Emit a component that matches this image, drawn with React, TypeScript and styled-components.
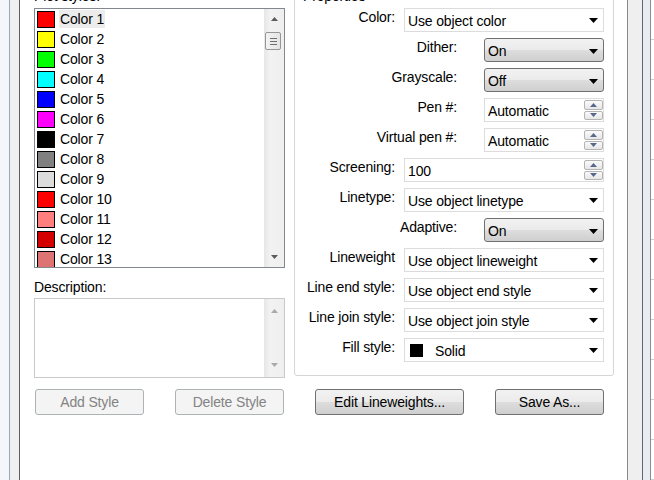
import React from "react"
import styled, { createGlobalStyle } from "styled-components"

const GlobalStyle = createGlobalStyle`
  html, body {
    margin: 0;
    padding: 0;
    background: #ffffff;
  }
  body {
    font-family: "Liberation Sans", Arial, sans-serif;
    font-size: 14px;
    letter-spacing: -0.15px;
    color: #000;
  }
`

const styles = [
  { name: "Color 1", color: "#ff0000" },
  { name: "Color 2", color: "#ffff00" },
  { name: "Color 3", color: "#00ff00" },
  { name: "Color 4", color: "#00ffff" },
  { name: "Color 5", color: "#0000ff" },
  { name: "Color 6", color: "#ff00ff" },
  { name: "Color 7", color: "#000000" },
  { name: "Color 8", color: "#808080" },
  { name: "Color 9", color: "#dcdcdc" },
  { name: "Color 10", color: "#ff0000" },
  { name: "Color 11", color: "#ff7f7f" },
  { name: "Color 12", color: "#d40000" },
  { name: "Color 13", color: "#dd7373" },
]

type Prop =
  | { label: string; kind: "flat"; value: string; fill?: boolean }
  | { label: string; kind: "button"; value: string }
  | { label: string; kind: "spin"; value: string; short?: boolean }

const properties: Prop[] = [
  { label: "Color:", kind: "flat", value: "Use object color" },
  { label: "Dither:", kind: "button", value: "On" },
  { label: "Grayscale:", kind: "button", value: "Off" },
  { label: "Pen #:", kind: "spin", value: "Automatic", short: true },
  { label: "Virtual pen #:", kind: "spin", value: "Automatic", short: true },
  { label: "Screening:", kind: "spin", value: "100" },
  { label: "Linetype:", kind: "flat", value: "Use object linetype" },
  { label: "Adaptive:", kind: "button", value: "On" },
  { label: "Lineweight", kind: "flat", value: "Use object lineweight" },
  { label: "Line end style:", kind: "flat", value: "Use object end style" },
  { label: "Line join style:", kind: "flat", value: "Use object join style" },
  { label: "Fill style:", kind: "flat", value: "Solid", fill: true },
]

function Caret() {
  return (
    <svg width="9" height="5" viewBox="0 0 9 5">
      <path d="M0 0h9L4.5 5z" fill="#000" />
    </svg>
  )
}

function ScrollArrow({ up, color }: { up?: boolean; color: string }) {
  return (
    <svg width="7" height="4" viewBox="0 0 7 4">
      <path d={up ? "M0 4h7L3.5 0z" : "M0 0h7L3.5 4z"} fill={color} />
    </svg>
  )
}

function SpinArrow({ up }: { up?: boolean }) {
  return (
    <svg width="7" height="4" viewBox="0 0 7 4">
      <path d={up ? "M0 4h7L3.5 0z" : "M0 0h7L3.5 4z"} fill="#56698c" />
    </svg>
  )
}

function Control({ prop }: { prop: Prop }) {
  const short = prop.kind === "button" || (prop.kind === "spin" && prop.short)
  if (prop.kind === "button") {
    return (
      <ButtonSelect $short>
        <span>{prop.value}</span>
        <Caret />
      </ButtonSelect>
    )
  }
  if (prop.kind === "spin") {
    return (
      <SpinBox $short={short}>
        <SpinText>{prop.value}</SpinText>
        <SpinButtons>
          <SpinButton>
            <SpinArrow up />
          </SpinButton>
          <SpinButton>
            <SpinArrow />
          </SpinButton>
        </SpinButtons>
      </SpinBox>
    )
  }
  return (
    <FlatSelect>
      <SelectValue>
        {prop.fill && <FillSwatch />}
        {prop.value}
      </SelectValue>
      <Caret />
    </FlatSelect>
  )
}

export default function App() {
  return (
    <Screen>
      <GlobalStyle />
      <LeftBackdrop />
      <LeftFrame />
      <Dialog>
        <Columns>
          <LeftColumn>
            <PaneLabel>Plot styles:</PaneLabel>
            <ListBox>
              <ListItems>
                {styles.map((s, i) => (
                  <ListRow key={s.name}>
                    <Swatch style={{ background: s.color }} />
                    <ItemName $selected={i === 0}>{s.name}</ItemName>
                  </ListRow>
                ))}
              </ListItems>
              <ScrollBar>
                <ArrowBox>
                  <ScrollArrow up color="#5c5c5c" />
                </ArrowBox>
                <Thumb>
                  <Grip />
                  <Grip />
                  <Grip />
                </Thumb>
                <ScrollSpace />
                <ArrowBox>
                  <ScrollArrow color="#5c5c5c" />
                </ArrowBox>
              </ScrollBar>
            </ListBox>
            <DescLabel>Description:</DescLabel>
            <TextArea>
              <TextBody />
              <ScrollBar>
                <ArrowBox $tall>
                  <ScrollArrow up color="#a9a9a9" />
                </ArrowBox>
                <ScrollSpace />
                <ArrowBox $tall>
                  <ScrollArrow color="#a9a9a9" />
                </ArrowBox>
              </ScrollBar>
            </TextArea>
          </LeftColumn>
          <GroupBox>
            <Legend>Properties</Legend>
            <PropList>
              {properties.map((p) => {
                const short = p.kind === "button" || (p.kind === "spin" && !!p.short)
                return (
                  <PropRow key={p.label} $short={short}>
                    <PropLabel>{p.label}</PropLabel>
                    <Control prop={p} />
                  </PropRow>
                )
              })}
            </PropList>
          </GroupBox>
        </Columns>
        <ButtonBar>
          <ButtonGroup $left>
            <DialogButton disabled $w={109}>Add Style</DialogButton>
            <DialogButton disabled $w={109}>Delete Style</DialogButton>
          </ButtonGroup>
          <ButtonGroup>
            <DialogButton $w={149}>Edit Lineweights...</DialogButton>
            <DialogButton $w={109}>Save As...</DialogButton>
          </ButtonGroup>
        </ButtonBar>
      </Dialog>
      <RightFrame />
      <RightBackdrop>
        <BackdropStrip />
        <BackdropGrid />
      </RightBackdrop>
    </Screen>
  )
}

const Screen = styled.div`
  display: flex;
  width: 654px;
  height: 480px;
  overflow: hidden;
  background: #fff;
`
const LeftBackdrop = styled.div`
  width: 9px;
  flex: none;
  background: #f3f6fa;
`
const LeftFrame = styled.div`
  width: 11px;
  flex: none;
  box-sizing: border-box;
  border-left: 1px solid #9aa6b6;
  border-right: 1px solid #5e5e5e;
  background: #eef0f2;
`
const Dialog = styled.div`
  width: 607px;
  flex: none;
  box-sizing: border-box;
  padding: 0 13px 0 14px;
  background: #fff;
  display: flex;
  flex-direction: column;
`
const Columns = styled.div`
  display: flex;
  align-items: flex-start;
  gap: 9px;
  margin-top: -12px;
`
const LeftColumn = styled.div`
  width: 251px;
  display: flex;
  flex-direction: column;
`
const PaneLabel = styled.div`
  line-height: 16px;
  margin-bottom: 4px;
`
const ListBox = styled.div`
  height: 260px;
  box-sizing: border-box;
  border: 1px solid #828790;
  display: flex;
  overflow: hidden;
`
const ListItems = styled.div`
  flex: 1;
  display: flex;
  flex-direction: column;
  overflow: hidden;
`
const ListRow = styled.div`
  height: 20px;
  flex: none;
  display: flex;
  align-items: center;
  padding-left: 2px;
`
const Swatch = styled.div`
  width: 18px;
  height: 17px;
  box-sizing: border-box;
  border: 1px solid #000;
  flex: none;
`
const ItemName = styled.span<{ $selected?: boolean }>`
  margin-left: 4px;
  padding: 0 1px;
  line-height: 18px;
  background: ${(p) => (p.$selected ? "#ececec" : "transparent")};
`
const ScrollBar = styled.div`
  width: 20px;
  flex: none;
  display: flex;
  flex-direction: column;
  background: linear-gradient(to right, #e6e6e6, #f2f2f2 30%, #efefef);
`
const ArrowBox = styled.div<{ $tall?: boolean }>`
  height: ${(p) => (p.$tall ? 24 : 20)}px;
  display: flex;
  align-items: center;
  justify-content: center;
  flex: none;
`
const Thumb = styled.div`
  margin: 3px 3px 0 1px;
  height: 18px;
  box-sizing: border-box;
  border: 1px solid #979797;
  border-radius: 2px;
  background: linear-gradient(to right, #f3f3f3, #e4e4e4);
  display: flex;
  flex-direction: column;
  align-items: center;
  justify-content: center;
  gap: 2px;
`
const Grip = styled.div`
  width: 7px;
  height: 1px;
  background: #6f6f6f;
`
const ScrollSpace = styled.div`
  flex: 1;
`
const DescLabel = styled.div`
  line-height: 16px;
  margin-top: 11px;
`
const TextArea = styled.div`
  margin-top: 3px;
  height: 80px;
  box-sizing: border-box;
  border: 1px solid #c7c9cd;
  display: flex;
`
const TextBody = styled.div`
  flex: 1;
`
const GroupBox = styled.fieldset`
  width: 320px;
  box-sizing: border-box;
  margin: 0;
  padding: 4px 9px 13px 0;
  border: 1px solid #d5d5d5;
  border-radius: 3px;
  min-width: 0;
`
const Legend = styled.legend`
  padding: 0 2px;
  margin-left: 6px;
  line-height: 16px;
`
const PropList = styled.div`
  display: flex;
  flex-direction: column;
  gap: 6px;
`
const PropRow = styled.div<{ $short?: boolean }>`
  display: flex;
  justify-content: flex-end;
  align-items: flex-start;
  gap: ${(p) => (p.$short ? 27 : 9)}px;
  height: 24px;
`
const PropLabel = styled.div`
  padding-top: 1px;
  line-height: 16px;
  white-space: nowrap;
`
const FlatSelect = styled.div`
  width: 200px;
  height: 24px;
  box-sizing: border-box;
  border: 1px solid #dcdcdc;
  background: #fff;
  display: flex;
  align-items: center;
  justify-content: space-between;
  padding: 1px 5px 0 3px;
`
const SelectValue = styled.span`
  display: flex;
  align-items: center;
  white-space: nowrap;
`
const FillSwatch = styled.span`
  width: 13px;
  height: 13px;
  background: #000;
  margin: 0 12px 0 2px;
`
const ButtonSelect = styled.div<{ $short?: boolean }>`
  width: ${(p) => (p.$short ? 120 : 200)}px;
  height: 24px;
  box-sizing: border-box;
  border: 1px solid #707070;
  border-radius: 3px;
  background: linear-gradient(#f2f2f2 0%, #ebebeb 48%, #dddddd 52%, #cfcfcf 100%);
  display: flex;
  align-items: center;
  justify-content: space-between;
  padding: 2px 5px 0 3px;
`
const SpinBox = styled.div<{ $short?: boolean }>`
  width: ${(p) => (p.$short ? 120 : 200)}px;
  height: 24px;
  box-sizing: border-box;
  border: 1px solid #dcdcdc;
  background: #fff;
  display: flex;
  align-items: stretch;
`
const SpinText = styled.div`
  flex: 1;
  padding: 1px 0 0 3px;
  display: flex;
  align-items: center;
`
const SpinButtons = styled.div`
  width: 19px;
  display: flex;
  flex-direction: column;
  padding: 1px 0;
  gap: 1px;
`
const SpinButton = styled.div`
  flex: 1;
  box-sizing: border-box;
  border: 1px solid #b4b4b4;
  border-radius: 2px;
  background: linear-gradient(#fafafa, #e6e6e6);
  display: flex;
  align-items: center;
  justify-content: center;
`
const ButtonBar = styled.div`
  display: flex;
  gap: 9px;
  margin-top: 11px;
`
const ButtonGroup = styled.div<{ $left?: boolean }>`
  display: flex;
  justify-content: space-between;
  box-sizing: border-box;
  width: ${(p) => (p.$left ? 251 : 320)}px;
  padding: ${(p) => (p.$left ? "0 1px" : "0 10px 0 21px")};
`
const DialogButton = styled.button<{ $w: number }>`
  width: ${(p) => p.$w}px;
  height: 26px;
  box-sizing: border-box;
  border-radius: 3px;
  font-family: "Liberation Sans", Arial, sans-serif;
  font-size: 14px;
  letter-spacing: -0.15px;
  padding: 0;
  border: 1px solid #707070;
  color: #000;
  background: linear-gradient(#f2f2f2 0%, #ebebeb 48%, #dddddd 52%, #cfcfcf 100%);
  &:disabled {
    border-color: #adb2b5;
    color: #838383;
    background: #f4f4f4;
  }
`
const RightFrame = styled.div`
  width: 16px;
  flex: none;
  box-sizing: border-box;
  border-left: 1px solid #8a8a8a;
  border-right: 1px solid #5d6877;
  background: #efefef;
`
const RightBackdrop = styled.div`
  width: 11px;
  flex: none;
  display: flex;
`
const BackdropStrip = styled.div`
  width: 8px;
  box-sizing: border-box;
  border-right: 1px solid #8c8c8c;
  background: #e9ecf0;
`
const BackdropGrid = styled.div`
  flex: 1;
  background: repeating-linear-gradient(#ffffff 0px, #ffffff 39px, #cfcfcf 39px, #cfcfcf 40px);
`
